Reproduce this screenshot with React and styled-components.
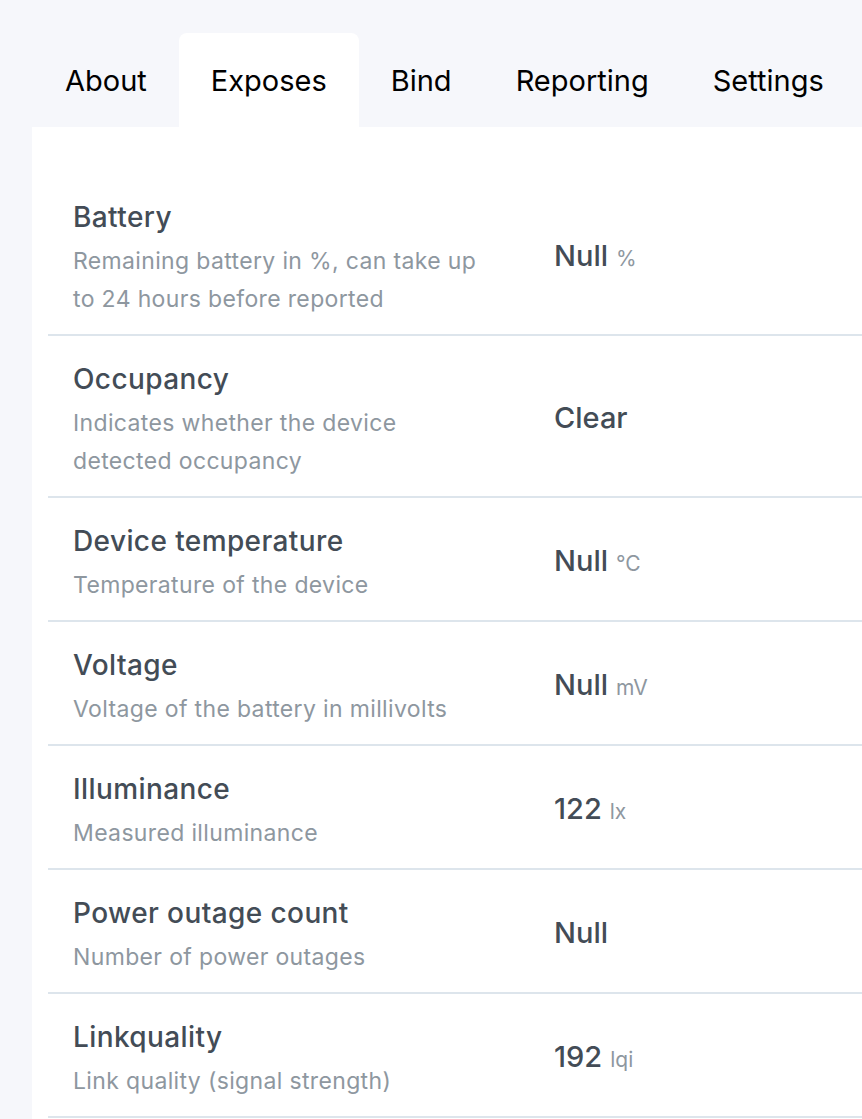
import React from 'react';
import styled, { createGlobalStyle } from 'styled-components';

const GlobalStyle = createGlobalStyle`
  body {
    margin: 0;
    background: #f6f7fb;
    font-family: Inter, "Noto Sans", sans-serif;
    -webkit-font-smoothing: antialiased;
  }
`;

const tabs = ['About', 'Exposes', 'Bind', 'Reporting', 'Settings'];

const exposes = [
  { name: 'Battery', description: 'Remaining battery in %, can take up to 24 hours before reported', value: 'Null', unit: '%' },
  { name: 'Occupancy', description: 'Indicates whether the device detected occupancy', value: 'Clear' },
  { name: 'Device temperature', description: 'Temperature of the device', value: 'Null', unit: '°C' },
  { name: 'Voltage', description: 'Voltage of the battery in millivolts', value: 'Null', unit: 'mV' },
  { name: 'Illuminance', description: 'Measured illuminance', value: '122', unit: 'lx' },
  { name: 'Power outage count', description: 'Number of power outages', value: 'Null' },
  { name: 'Linkquality', description: 'Link quality (signal strength)', value: '192', unit: 'lqi' }
];

const App = () => (
  <Page>
    <GlobalStyle />
    <TabBar>
      {tabs.map(tab => (
        <Tab key={tab} active={tab === 'Exposes'}>{tab}</Tab>
      ))}
    </TabBar>
    <Card>
      {exposes.map(item => (
        <Row key={item.name}>
          <Info>
            <Title>{item.name}</Title>
            <Description>{item.description}</Description>
          </Info>
          <Value>
            {item.value}
            {item.unit && <Unit>{item.unit}</Unit>}
          </Value>
        </Row>
      ))}
    </Card>
  </Page>
);

const Page = styled.div`
  padding: 33px 0 0 32px;
  overflow: hidden;
`;

const TabBar = styled.div`
  display: flex;
  padding-left: 1px;
`;

const Tab = styled.div`
  height: 94px;
  padding: 0 32px;
  display: flex;
  align-items: center;
  font-size: 29px;
  color: #000;
  white-space: nowrap;
  border-radius: 8px 8px 0 0;
  background: ${p => (p.active ? '#fff' : 'transparent')};
`;

const Card = styled.div`
  background: #fff;
  padding: 47px 0 0 16px;
  min-height: 1000px;
`;

const Row = styled.div`
  display: flex;
  align-items: center;
  padding: 22px 0 16px 25px;
  border-bottom: 2px solid #dde5ec;
`;

const Info = styled.div`
  width: 412px;
  margin-right: 69px;
  flex-shrink: 0;
`;

const Title = styled.div`
  font-size: 28px;
  line-height: 42px;
  font-weight: 500;
  letter-spacing: 0.4px;
  color: #434c56;
`;

const Description = styled.div`
  margin-top: 4px;
  font-size: 23px;
  line-height: 38px;
  letter-spacing: 0.35px;
  color: #8e979f;
`;

const Value = styled.div`
  font-size: 29px;
  font-weight: 500;
  color: #434c56;
  margin-top: -4px;
`;

const Unit = styled.span`
  margin-left: 8px;
  font-size: 21px;
  font-weight: 400;
  color: #8e979f;
`;

export default App;
